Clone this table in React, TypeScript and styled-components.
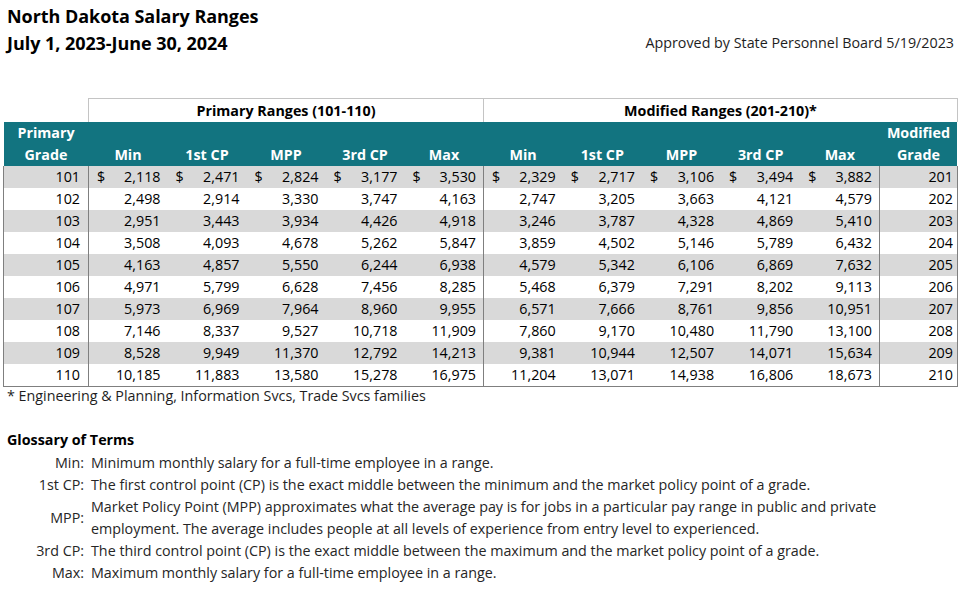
import React from "react";
import styled, { createGlobalStyle } from "styled-components";

const GlobalStyle = createGlobalStyle`
  html, body { margin: 0; padding: 0; background: #ffffff; }
  body {
    font-family: "Open Sans", "Noto Sans", "Liberation Sans", sans-serif;
    color: #000;
  }
`;

const Page = styled.div`
  width: 967px;
  height: 590px;
  overflow: hidden;
  box-sizing: border-box;
`;

const TopBar = styled.header`
  display: flex;
  justify-content: space-between;
  align-items: flex-start;
  padding: 3px 13px 0 7px;
  height: 98px;
  box-sizing: border-box;
`;

const Titles = styled.div`
  display: flex;
  flex-direction: column;
`;

const Title = styled.h1`
  margin: 0;
  font-size: 18px;
  font-weight: 700;
  line-height: 27px;
  letter-spacing: -0.05px;
  color: #000;
`;

const Approved = styled.div`
  margin-top: 30px;
  font-size: 14.3px;
  line-height: 20px;
  color: #1e1e1e;
`;

const Table = styled.table`
  margin-left: 3px;
  width: 954px;
  border-collapse: collapse;
  table-layout: fixed;
  font-size: 14.3px;
`;

const GroupCell = styled.th<{ $empty?: boolean }>`
  height: 23px;
  padding: 0;
  font-weight: 700;
  font-size: 14.3px;
  text-align: center;
  vertical-align: middle;
  color: #000;
  border-top: ${(p) => (p.$empty ? "none" : "1px solid #c4c4c4")};
  border-left: ${(p) => (p.$empty ? "none" : "1px solid #c4c4c4")};
  border-right: ${(p) => (p.$empty ? "none" : "1px solid #c4c4c4")};
  border-bottom: none;
`;

const HeadCell = styled.th`
  height: 43px;
  padding: 0 2px;
  background: #127480;
  color: #fff;
  font-weight: 700;
  font-size: 14.3px;
  line-height: 22px;
  text-align: center;
  vertical-align: bottom;
  border: none;
`;

const Row = styled.tr<{ $shade: boolean; $last?: boolean }>`
  height: 22px;
  background: ${(p) => (p.$shade ? "#d9d9d9" : "#ffffff")};
  td {
    border-bottom: ${(p) => (p.$last ? "1px solid #7f7f7f" : "none")};
  }
`;

const GradeCell = styled.td<{ $side: "left" | "right" }>`
  padding: 0 ${(p) => (p.$side === "left" ? "8px" : "4px")} 0 0;
  text-align: right;
  line-height: 22px;
  color: #000;
  border-left: 1px solid #7f7f7f;
  border-right: 1px solid #7f7f7f;
`;

const MoneyCell = styled.td<{ $edge?: boolean }>`
  padding: 0 7px 0 8px;
  line-height: 22px;
  color: #000;
  border-left: ${(p) => (p.$edge ? "1px solid #7f7f7f" : "none")};
`;

const Money = styled.div`
  display: flex;
  justify-content: space-between;
`;

const Footnote = styled.p`
  margin: 0;
  padding-left: 7px;
  font-size: 14.3px;
  line-height: 18px;
  color: #1e1e1e;
`;

const Glossary = styled.section`
  margin-top: 25px;
  padding-left: 7px;
`;

const GlossaryTitle = styled.h2`
  margin: 0 0 2px;
  font-size: 14.3px;
  font-weight: 700;
  line-height: 20px;
  color: #000;
`;

const DefList = styled.dl`
  margin: 0;
  display: grid;
  grid-template-columns: 77px 1fr;
  column-gap: 7px;
  font-size: 14.3px;
  line-height: 22px;
  color: #262626;
`;

const Term = styled.dt`
  text-align: right;
  align-self: center;
`;

const Desc = styled.dd`
  margin: 0;
  white-space: nowrap;
`;

const primary = [
  [101, 2118, 2471, 2824, 3177, 3530],
  [102, 2498, 2914, 3330, 3747, 4163],
  [103, 2951, 3443, 3934, 4426, 4918],
  [104, 3508, 4093, 4678, 5262, 5847],
  [105, 4163, 4857, 5550, 6244, 6938],
  [106, 4971, 5799, 6628, 7456, 8285],
  [107, 5973, 6969, 7964, 8960, 9955],
  [108, 7146, 8337, 9527, 10718, 11909],
  [109, 8528, 9949, 11370, 12792, 14213],
  [110, 10185, 11883, 13580, 15278, 16975],
];

const modified = [
  [2329, 2717, 3106, 3494, 3882, 201],
  [2747, 3205, 3663, 4121, 4579, 202],
  [3246, 3787, 4328, 4869, 5410, 203],
  [3859, 4502, 5146, 5789, 6432, 204],
  [4579, 5342, 6106, 6869, 7632, 205],
  [5468, 6379, 7291, 8202, 9113, 206],
  [6571, 7666, 8761, 9856, 10951, 207],
  [7860, 9170, 10480, 11790, 13100, 208],
  [9381, 10944, 12507, 14071, 15634, 209],
  [11204, 13071, 14938, 16806, 18673, 210],
];

const fmt = (n: number) => n.toLocaleString("en-US");

const cols = ["Min", "1st CP", "MPP", "3rd CP", "Max"];

function MoneyTd({ value, dollar, edge }: { value: number; dollar: boolean; edge?: boolean }) {
  return (
    <MoneyCell $edge={edge}>
      <Money>
        <span>{dollar ? "$" : ""}</span>
        <span>{fmt(value)}</span>
      </Money>
    </MoneyCell>
  );
}

export default function App() {
  return (
    <Page>
      <GlobalStyle />
      <TopBar>
        <Titles>
          <Title>North Dakota Salary Ranges</Title>
          <Title>July 1, 2023-June 30, 2024</Title>
        </Titles>
        <Approved>Approved by State Personnel Board 5/19/2023</Approved>
      </TopBar>
      <Table>
        <colgroup>
          <col style={{ width: 85 }} />
          {cols.map((c) => (
            <col key={"p" + c} style={{ width: 79 }} />
          ))}
          {cols.map((c) => (
            <col key={"m" + c} style={{ width: 79.2 }} />
          ))}
          <col style={{ width: 78 }} />
        </colgroup>
        <thead>
          <tr>
            <GroupCell $empty />
            <GroupCell colSpan={5}>Primary Ranges (101-110)</GroupCell>
            <GroupCell colSpan={6}>Modified Ranges (201-210)*</GroupCell>
          </tr>
          <tr>
            <HeadCell>
              Primary
              <br />
              Grade
            </HeadCell>
            {cols.map((c) => (
              <HeadCell key={"hp" + c}>{c}</HeadCell>
            ))}
            {cols.map((c) => (
              <HeadCell key={"hm" + c}>{c}</HeadCell>
            ))}
            <HeadCell>
              Modified
              <br />
              Grade
            </HeadCell>
          </tr>
        </thead>
        <tbody>
          {primary.map((p, i) => {
            const m = modified[i];
            const dollar = i === 0;
            return (
              <Row key={p[0]} $shade={i % 2 === 0} $last={i === primary.length - 1}>
                <GradeCell $side="left">{p[0]}</GradeCell>
                {p.slice(1).map((v, j) => (
                  <MoneyTd key={"p" + j} value={v} dollar={dollar} />
                ))}
                {m.slice(0, 5).map((v, j) => (
                  <MoneyTd key={"m" + j} value={v} dollar={dollar} edge={j === 0} />
                ))}
                <GradeCell $side="right">{m[5]}</GradeCell>
              </Row>
            );
          })}
        </tbody>
      </Table>
      <Footnote>* Engineering &amp; Planning, Information Svcs, Trade Svcs families</Footnote>
      <Glossary>
        <GlossaryTitle>Glossary of Terms</GlossaryTitle>
        <DefList>
          <Term>Min:</Term>
          <Desc>Minimum monthly salary for a full-time employee in a range.</Desc>
          <Term>1st CP:</Term>
          <Desc>The first control point (CP) is the exact middle between the minimum and the market policy point of a grade.</Desc>
          <Term>MPP:</Term>
          <Desc>
            Market Policy Point (MPP) approximates what the average pay is for jobs in a particular pay range in public and private
            <br />
            employment. The average includes people at all levels of experience from entry level to experienced.
          </Desc>
          <Term>3rd CP:</Term>
          <Desc>The third control point (CP) is the exact middle between the maximum and the market policy point of a grade.</Desc>
          <Term>Max:</Term>
          <Desc>Maximum monthly salary for a full-time employee in a range.</Desc>
        </DefList>
      </Glossary>
    </Page>
  );
}
